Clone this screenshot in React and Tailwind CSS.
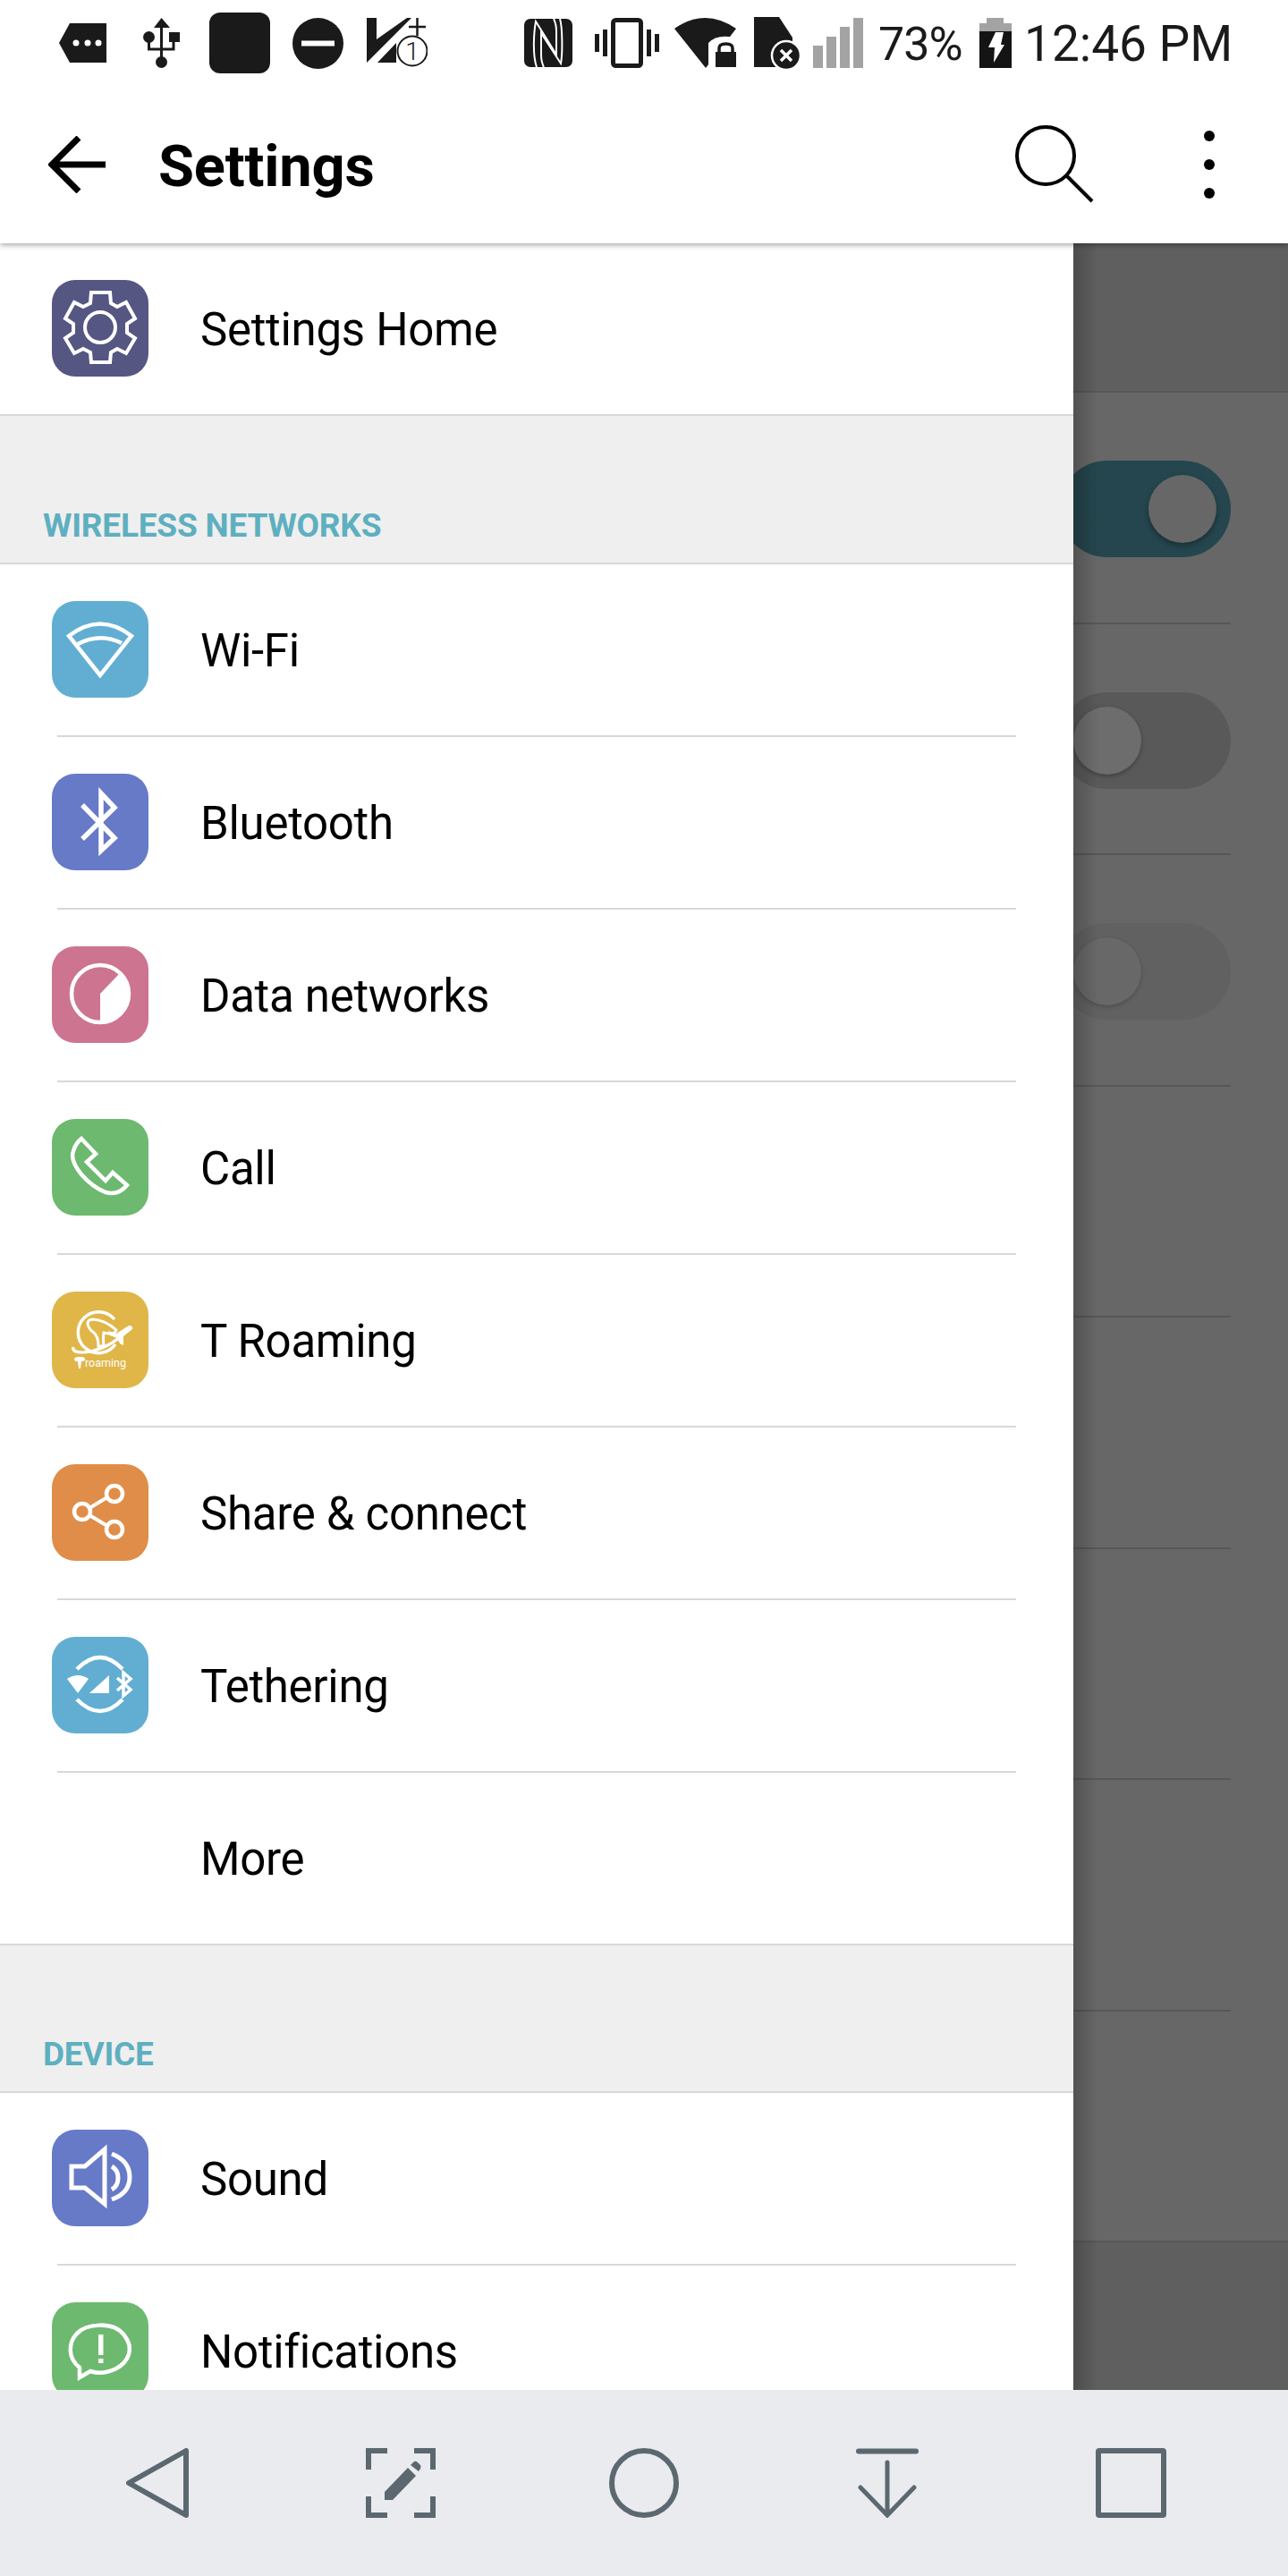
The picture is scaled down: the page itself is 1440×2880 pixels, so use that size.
const SETTINGS_GROUPS = {
  wireless: [
    { label: "Wi-Fi", color: "bg-[#62aed3]", icon: "wifi" },
    { label: "Bluetooth", color: "bg-[#677ac8]", icon: "bluetooth" },
    { label: "Data networks", color: "bg-[#cd7491]", icon: "data" },
    { label: "Call", color: "bg-[#6db96f]", icon: "call" },
    { label: "T Roaming", color: "bg-[#e0b649]", icon: "roaming" },
    { label: "Share & connect", color: "bg-[#e08d49]", icon: "share" },
    { label: "Tethering", color: "bg-[#62aed3]", icon: "tether" },
    { label: "More", color: "", icon: null },
  ],
  device: [
    { label: "Sound", color: "bg-[#677ac8]", icon: "sound" },
    { label: "Notifications", color: "bg-[#6db96f]", icon: "bell" },
  ],
};

// Tile glyphs share a 108 unit box
const TILE_GLYPHS = {
  gear: (
    <>
      <path d="M44 14H65L66 26L73 30L83 25L93 43L84 49V59L93 65L83 82L73 77L66 81L65 92H44L43 81L35 77L25 82L15 65L24 59V49L15 43L25 25L35 30L43 26Z" fill="none" stroke="white" strokeWidth="4" />
      <circle cx="54" cy="53" r="17" fill="none" stroke="white" strokeWidth="4" />
    </>
  ),
  wifi: (
    <>
      <path d="M54 83L19 39Q54 12 89 39Z" fill="none" stroke="white" strokeWidth="4.5" />
      <path d="M29 48Q54 35 78 47" fill="none" stroke="white" strokeWidth="4.5" />
    </>
  ),
  bluetooth: <path d="M34 35L70 72L55 86V22L70 38L34 73" fill="none" stroke="white" strokeWidth="5.5" />,
  data: (
    <>
      <circle cx="54" cy="53" r="32" fill="none" stroke="white" strokeWidth="4.5" />
      <path d="M54 53V85A32 32 0 0 0 76 30Z" fill="white" />
    </>
  ),
  call: (
    <path d="M33 22L49 39L39 48L60 69L68 60L84 74Q74 86 60 82Q45 76 33 62Q20 46 24 36Q26 28 33 22Z" fill="none" stroke="white" strokeWidth="4.5" />
  ),
  roaming: (
    <>
      <path d="M71 59A23 23 0 1 1 70 31" fill="none" stroke="white" strokeWidth="3.5" />
      <path d="M40 36Q40 31 46 31Q60 32 72 43Q70 48 64 47L58 46Q57 52 58 61H52Q52 50 47 46Q41 42 40 36Z" fill="none" stroke="white" strokeWidth="3" />
      <path d="M24 62Q22 68 35 68Q58 66 76 51" fill="none" stroke="white" strokeWidth="3.2" />
      <path d="M63 44L72 47L86 38Q91 38 90 42L80 50L80 60L76 58L73 52L65 49Z" fill="white" />
      <path d="M25 76Q25 73 30 73H34Q38 74 37 77Q35 78 33 78L32 86H30L29 78Q25 78 25 76Z" fill="white" />
      <text x="37" y="84" fontSize="12.5" fill="white">roaming</text>
    </>
  ),
  share: (
    <>
      <path d="M62 37L42 49M42 57L62 69" stroke="white" strokeWidth="4" />
      <circle cx="70" cy="33" r="9" fill="none" stroke="white" strokeWidth="4.5" />
      <circle cx="34" cy="53" r="9" fill="none" stroke="white" strokeWidth="4.5" />
      <circle cx="70" cy="73" r="9" fill="none" stroke="white" strokeWidth="4.5" />
    </>
  ),
  tether: (
    <>
      <path d="M28 36Q54 10 79 36" fill="none" stroke="white" strokeWidth="4.5" />
      <path d="M28 70Q54 96 79 70" fill="none" stroke="white" strokeWidth="4.5" />
      <path d="M17 47Q29 39 41 47L29 63Z" fill="white" />
      <path d="M64 43V63H42Z" fill="white" />
      <path d="M73 46L88 59L80 66V40L88 47L73 60" fill="none" stroke="white" strokeWidth="3.5" />
    </>
  ),
  sound: (
    <>
      <path d="M22 41H37L59 22V83L37 65H22Z" fill="none" stroke="white" strokeWidth="5" />
      <path d="M67 27Q87 35 87 53Q87 71 67 78" fill="none" stroke="white" strokeWidth="5" />
      <path d="M67 41Q74 45 74 54Q74 63 67 67" fill="none" stroke="white" strokeWidth="5" />
    </>
  ),
  bell: (
    <>
      <path d="M31 73C17 62 19 45 27 36C38 23 69 21 81 37C93 52 85 67 72 74C62 79 52 80 43 77L31 84Z" fill="none" stroke="white" strokeWidth="4.5" />
      <rect x="52" y="36" width="5.5" height="23" fill="white" />
      <rect x="52" y="63" width="5.5" height="5" fill="white" />
    </>
  ),
};

function IconTile({ color, icon }) {
  if (!icon) return <div className="w-[108px] h-[108px] shrink-0" />;
  return (
    <div className={`w-[108px] h-[108px] shrink-0 rounded-[26px] ${color}`}>
      <svg width="108" height="108" viewBox="0 0 108 108" className="block">
        {TILE_GLYPHS[icon]}
      </svg>
    </div>
  );
}

function SettingRow({ label, color, icon }) {
  return (
    <div className="h-[191px] pl-[58px] pb-[1px] flex items-center bg-white">
      <IconTile color={color} icon={icon} />
      <span className="ml-[58px] mt-[2px] text-[51px] leading-none font-[450] tracking-[-0.3px] text-black">{label}</span>
    </div>
  );
}

function SectionHeader({ title, height }) {
  return (
    <div className={`${height} bg-[#efefef] border-b-2 border-[#d8d8d8] pl-[48px] flex items-end pb-[18px]`}>
      <span className="text-[37px] leading-[46px] font-bold tracking-[-0.2px] text-[#5eafc0]">{title}</span>
    </div>
  );
}

function Group({ items }) {
  return items.map((item, i) => (
    <div key={item.label}>
      <SettingRow {...item} />
      {i < items.length - 1 ? (
        <div className="h-[2px] mx-[64px] bg-[#d8d8d8]" />
      ) : (
        <div className="h-[2px] bg-[#d8d8d8]" />
      )}
    </div>
  ));
}

function Toggle({ track, thumb, on, shadow }) {
  return (
    <div className={`w-[192px] h-[108px] shrink-0 rounded-full p-[16px] flex ${on ? "justify-end" : "justify-start"} ${track}`}>
      <div className={`w-[76px] h-[76px] rounded-full ${thumb} ${shadow}`} />
    </div>
  );
}

function DimmedRow({ children, last }) {
  return (
    <div className={`h-[258.5px] flex flex-col ${last ? "" : "pr-[64px]"}`}>
      <div className="flex-1 flex items-center justify-end pt-[4px]">{children}</div>
      <div className="h-[2px] bg-[#575757]" />
    </div>
  );
}

function StatusBar() {
  return (
    <div className="relative z-20 h-[96px] bg-white flex items-center pl-[66px] text-[#1a1a1a] shrink-0">
      {/* tag */}
      <svg width="53" height="44" viewBox="0 0 53 44" className="shrink-0">
        <path d="M0 22L12 0H53V44H12Z" fill="#1a1a1a" />
        <circle cx="19" cy="22" r="3.5" fill="white" />
        <circle cx="32" cy="22" r="3.5" fill="white" />
        <circle cx="44" cy="22" r="3.5" fill="white" />
      </svg>
      {/* usb */}
      <svg width="41" height="56" viewBox="0 0 41 56" className="ml-[41px] shrink-0">
        <path d="M20.5 0L30 11H12Z" fill="#1a1a1a" />
        <rect x="19" y="8" width="3" height="38" fill="#1a1a1a" />
        <ellipse cx="6.5" cy="21.5" rx="6.5" ry="6.5" fill="#1a1a1a" />
        <rect x="29" y="16" width="12" height="11" fill="#1a1a1a" />
        <path d="M6.5 26V35H34V26" fill="none" stroke="#1a1a1a" strokeWidth="3" />
        <ellipse cx="20.5" cy="49.5" rx="6.5" ry="6.5" fill="#1a1a1a" />
      </svg>
      <div className="w-[68px] h-[68px] ml-[33px] rounded-[12px] bg-[#1a1a1a] shrink-0" />
      {/* dnd */}
      <svg width="57" height="57" viewBox="0 0 57 57" className="ml-[25px] shrink-0">
        <circle cx="28.5" cy="28.5" r="28.5" fill="#1a1a1a" />
        <rect x="10" y="25.5" width="37" height="6" fill="white" />
      </svg>
      {/* volte */}
      <svg width="68" height="56" viewBox="0 0 68 56" className="ml-[26px] shrink-0">
        <path d="M0 0H11V24L45 0H50L0 50Z" fill="#1a1a1a" />
        <path d="M12 50L33 28V50Z" fill="#1a1a1a" />
        <path d="M47 10H66M56.5 0V20" stroke="#1a1a1a" strokeWidth="2.5" />
        <circle cx="51" cy="37" r="16.5" fill="white" stroke="#1a1a1a" strokeWidth="2" />
        <text x="51" y="47" textAnchor="middle" fontSize="28" fontWeight="300" fill="#1a1a1a">1</text>
      </svg>
      {/* nfc */}
      <svg width="54" height="54" viewBox="0 0 54 54" className="ml-[108px] shrink-0">
        <rect width="54" height="54" rx="7" fill="#1a1a1a" />
        <path d="M14 54C9 40 11 14 13 3L36 40V14C36 9 35 4 33 0" fill="none" stroke="white" strokeWidth="2" />
        <path d="M40 0C43 10 43 40 41 50L19 16V40C19 45 20 50 22 54" fill="none" stroke="white" strokeWidth="2" />
      </svg>
      {/* vibrate */}
      <svg width="72" height="56" viewBox="0 0 72 56" className="ml-[25px] shrink-0">
        <rect x="0" y="18" width="5" height="20" fill="#1a1a1a" />
        <rect x="9" y="13" width="5" height="30" fill="#1a1a1a" />
        <rect x="20.5" y="2.5" width="31" height="51" rx="3" fill="white" stroke="#1a1a1a" strokeWidth="5" />
        <rect x="58" y="13" width="5" height="30" fill="#1a1a1a" />
        <rect x="67" y="18" width="5" height="20" fill="#1a1a1a" />
      </svg>
      {/* wifi lock */}
      <svg width="69" height="56" viewBox="0 0 69 56" className="ml-[17px] shrink-0">
        <path d="M0 12Q34 -12 69 12L35 56Z" fill="#1a1a1a" />
        <path d="M38 56V28Q48 18 66 22V56Z" fill="white" />
        <rect x="46" y="38" width="23" height="17" fill="#1a1a1a" />
        <path d="M50 38V34Q50 29 57.5 29Q65 29 65 34V38" fill="none" stroke="#1a1a1a" strokeWidth="3.5" />
      </svg>
      {/* sim */}
      <svg width="52" height="58" viewBox="0 0 52 58" className="ml-[20px] shrink-0">
        <path d="M0 0H28L43 23V56H0Z" fill="#1a1a1a" />
        <circle cx="36" cy="43" r="16" fill="#1a1a1a" stroke="white" strokeWidth="2.5" />
        <path d="M30 37L42 49M42 37L30 49" stroke="white" strokeWidth="3.5" />
      </svg>
      {/* signal */}
      <div className="ml-[14px] h-[56px] flex items-end gap-[4px] shrink-0">
        <div className="w-[11px] h-[25px] bg-[#a3a3a3]" />
        <div className="w-[11px] h-[35px] bg-[#a3a3a3]" />
        <div className="w-[11px] h-[46px] bg-[#a3a3a3]" />
        <div className="w-[11px] h-[56px] bg-[#a3a3a3]" />
      </div>
      <span className="ml-[17px] mt-[3px] w-[94px] text-[52px] leading-none tracking-[-1px] shrink-0">73%</span>
      {/* battery */}
      <svg width="36" height="56" viewBox="0 0 36 56" className="ml-[19px] shrink-0">
        <rect x="8" y="0" width="19" height="6" fill="#a3a3a3" />
        <rect x="0" y="6" width="36" height="9" fill="#a3a3a3" />
        <rect x="0" y="15" width="36" height="41" fill="#141414" />
        <path d="M18 16H27L24 30H28L16 50L17 33H10Z" fill="white" />
      </svg>
      <span className="ml-[14px] mt-[3px] text-[55px] leading-none shrink-0">12:46 PM</span>
    </div>
  );
}

function AppBar() {
  return (
    <div className="relative z-10 h-[176px] bg-white flex items-center shrink-0 shadow-[0_2px_6px_rgba(0,0,0,0.35)]">
      <svg width="64" height="64" viewBox="0 0 64 64" className="ml-[54px] shrink-0">
        <path d="M64 32H4M34 2L4 32L34 62" fill="none" stroke="black" strokeWidth="7" />
      </svg>
      <h1 className="ml-[59px] mt-[5px] text-[65px] leading-none font-bold tracking-[-0.2px] text-black">Settings</h1>
      <div className="ml-auto flex items-center pr-[82px]">
        <svg width="88" height="88" viewBox="0 0 88 88">
          <circle cx="34" cy="34" r="32" fill="none" stroke="black" strokeWidth="4" />
          <path d="M58 57L86 85" stroke="black" strokeWidth="4" />
        </svg>
        <div className="ml-[123px] flex flex-col gap-[20px]">
          <div className="w-[12px] h-[12px] rounded-full bg-black" />
          <div className="w-[12px] h-[12px] rounded-full bg-black" />
          <div className="w-[12px] h-[12px] rounded-full bg-black" />
        </div>
      </div>
    </div>
  );
}

function NavBar() {
  return (
    <div className="h-[208px] bg-[#e9ebef] grid grid-cols-5 px-[40px] items-center shrink-0">
      <div className="flex justify-center">
        <svg width="70" height="78" viewBox="0 0 70 78">
          <path d="M67 3V75L3 39Z" fill="none" stroke="#5c6870" strokeWidth="6" strokeLinejoin="round" />
        </svg>
      </div>
      <div className="flex justify-center">
        <svg width="78" height="78" viewBox="0 0 78 78">
          <path d="M24 3H3V24M54 3H75V24M3 54V75H24M75 54V75H54" fill="none" stroke="#5c6870" strokeWidth="6" />
          <path d="M21 49L47 22L56 31L30 58H21Z" fill="#5c6870" />
          <path d="M50 19L54 15Q56 14 58 16L61 19Q62 21 61 23L59 26Z" fill="#5c6870" />
        </svg>
      </div>
      <div className="flex justify-center">
        <svg width="78" height="78" viewBox="0 0 78 78">
          <circle cx="39" cy="39" r="36" fill="none" stroke="#5c6870" strokeWidth="6" />
        </svg>
      </div>
      <div className="flex justify-center">
        <svg width="70" height="78" viewBox="0 0 70 78">
          <path d="M3 3.5H67" stroke="#5c6870" strokeWidth="6" strokeLinecap="round" />
          <path d="M35 16V74M5 44L35 75L65 44" fill="none" stroke="#5c6870" strokeWidth="5" strokeLinecap="round" />
        </svg>
      </div>
      <div className="flex justify-center">
        <svg width="79" height="78" viewBox="0 0 79 78">
          <rect x="3" y="3" width="73" height="72" fill="none" stroke="#5c6870" strokeWidth="6" rx="1" />
        </svg>
      </div>
    </div>
  );
}

export default function App() {
  return (
    <div className="w-[1440px] h-[2880px] flex flex-col overflow-hidden bg-white font-['Roboto',sans-serif]">
      <StatusBar />
      <AppBar />

      <div className="flex-1 min-h-0 flex overflow-hidden">
        {/* drawer */}
        <div className="w-[1200px] shrink-0 bg-white">
          <Group items={[{ label: "Settings Home", color: "bg-[#555682]", icon: "gear" }]} />
          <SectionHeader title="WIRELESS NETWORKS" height="h-[166px]" />
          <Group items={SETTINGS_GROUPS.wireless} />
          <SectionHeader title="DEVICE" height="h-[165px]" />
          <Group items={SETTINGS_GROUPS.device} />
        </div>

        {/* page behind the scrim */}
        <div className="relative flex-1 min-w-0 overflow-hidden flex flex-col bg-[#676767]">
          <div className="h-[165px] shrink-0 bg-[#5f5f5f]" />
          <div className="h-[2px] shrink-0 bg-[#575757]" />
          <DimmedRow>
            <Toggle track="bg-[#25464e]" thumb="bg-[#676767]" on shadow="shadow-[0_3px_6px_rgba(0,0,0,0.35)]" />
          </DimmedRow>
          <DimmedRow>
            <Toggle track="bg-[#595959]" thumb="bg-[#6d6d6d]" shadow="shadow-[0_2px_5px_rgba(0,0,0,0.3)]" />
          </DimmedRow>
          <DimmedRow>
            <Toggle track="bg-[#616161]" thumb="bg-[#686868]" shadow="shadow-[0_2px_5px_rgba(0,0,0,0.2)]" />
          </DimmedRow>
          <DimmedRow />
          <DimmedRow />
          <DimmedRow />
          <DimmedRow />
          <DimmedRow last />
          <div className="flex-1 bg-[#5f5f5f]" />
          {/* drawer edge shadow */}
          <div className="absolute inset-y-0 left-0 w-[28px] bg-gradient-to-r from-[rgba(0,0,0,0.2)] to-transparent" />
        </div>
      </div>

      <NavBar />
    </div>
  );
}
